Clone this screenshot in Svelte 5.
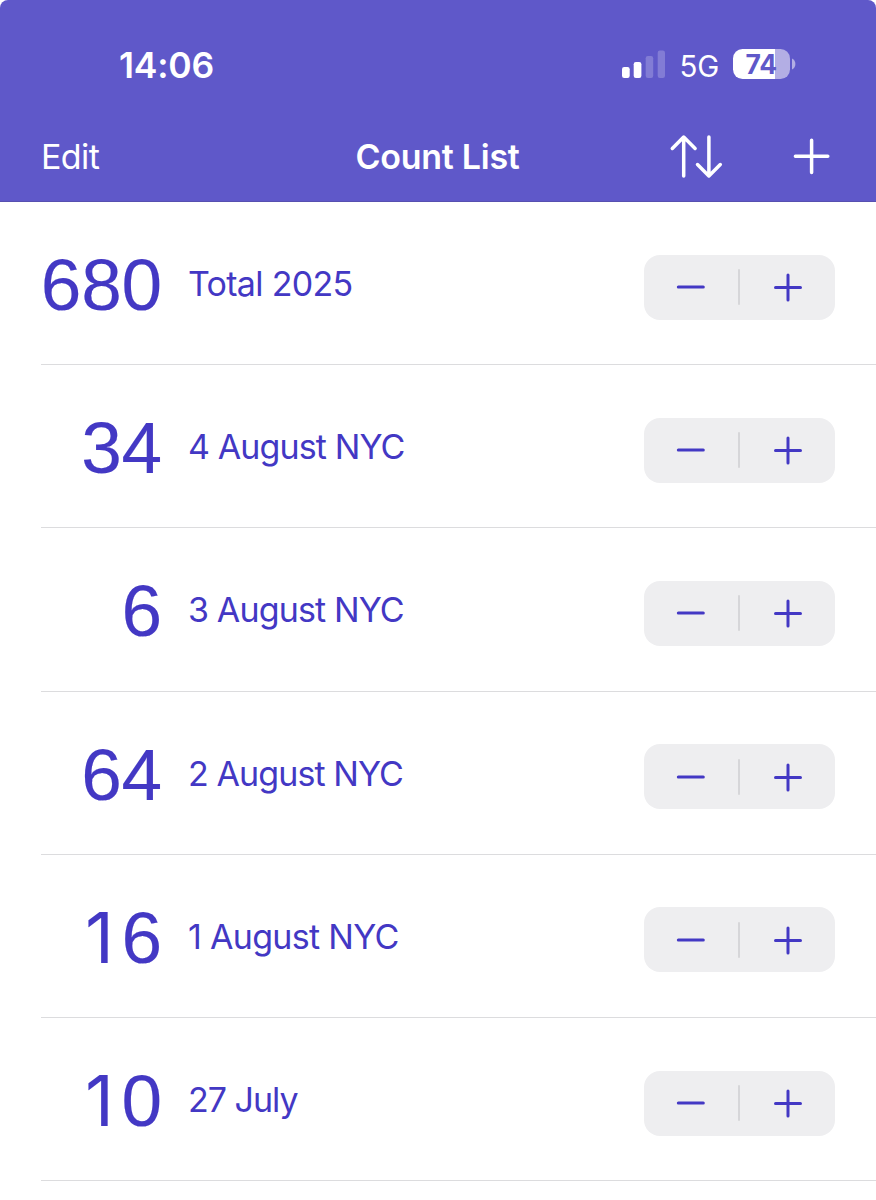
<script>
  let counters = $state([
    { count: 680, name: 'Total 2025', spacing: -0.7 },
    { count: 34, name: '4 August NYC', spacing: -0.88 },
    { count: 6, name: '3 August NYC', spacing: -0.86 },
    { count: 64, name: '2 August NYC', spacing: -0.9 },
    { count: 16, name: '1 August NYC', spacing: -0.7 },
    { count: 10, name: '27 July', spacing: -1 }
  ]);
</script>

<main class="screen">
  <header>
    <div class="status">
      <span class="clock">14:06</span>
      <div class="indicators">
        <svg class="signal" width="44" height="30" viewBox="0 0 44 30" fill="#fff">
          <rect x="0" y="18" width="7.7" height="11" rx="2.2" />
          <rect x="11.7" y="13" width="7.7" height="16" rx="2.2" />
          <rect x="23.7" y="7" width="7.5" height="22" rx="2.2" opacity=".22" />
          <rect x="35.7" y="1.5" width="7.3" height="27.5" rx="2.2" opacity=".22" />
        </svg>
        <span class="network">5G</span>
        <div class="battery"><span>74</span></div>
        <svg class="nub" width="4" height="12" viewBox="0 0 4 12"><path d="M0 0.5Q3.4 2.3 3.4 6T0 11.5Z" fill="#b3aee4" /></svg>
      </div>
    </div>
    <nav>
      <button class="edit">Edit</button>
      <h1>Count List</h1>
      <div class="actions">
        <button aria-label="Sort">
          <svg width="54" height="46" viewBox="0 0 54 46">
            <path d="M14.7 43V4.7M3.3 15.5L14.7 4L26.1 15.5M39.9 4V42.3M28.5 31.5L39.9 43L51.3 31.5" />
          </svg>
        </button>
        <button aria-label="Add">
          <svg width="40" height="40" viewBox="0 0 40 40">
            <path d="M19.6 4.2V36.4M3.4 20.3H35.8" />
          </svg>
        </button>
      </div>
    </nav>
  </header>

  <ul>
    {#each counters as counter}
      <li>
        <span class="count">{#each String(counter.count) as digit}<span class="digit" class:one={digit === '1'}>{digit}</span>{/each}</span>
        <span class="name" style:letter-spacing="{counter.spacing}px">{counter.name}</span>
        <div class="stepper">
          <button aria-label="Decrease" onclick={() => counter.count--}>
            <svg width="32" height="32" viewBox="0 0 32 32"><path d="M3.3 16H28.3" /></svg>
          </button>
          <i></i>
          <button aria-label="Increase" onclick={() => counter.count++}>
            <svg width="32" height="32" viewBox="0 0 32 32"><path d="M3.5 16.4H28.5M16 3.9V28.9" /></svg>
          </button>
        </div>
      </li>
    {/each}
  </ul>
</main>

<style>
  :global(body) { margin: 0; background: #fff; }
  .screen {
    width: 876px;
    height: 1200px;
    overflow: hidden;
    background: #fff;
    font-family: Inter, "Liberation Sans", sans-serif;
    color: #4338c4;
  }
  button {
    display: flex;
    align-items: center;
    justify-content: center;
    margin: 0;
    padding: 0;
    border: 0;
    background: none;
    color: inherit;
    font: inherit;
  }
  svg { display: block; flex: none; }
  path { stroke-linecap: round; stroke-linejoin: round; }
  header {
    box-sizing: border-box;
    height: 202px;
    background: #5f58c9;
    border-bottom: 1px solid #5750b0;
    border-radius: 8px 8px 0 0;
    color: #fff;
  }
  .status {
    display: flex;
    justify-content: space-between;
    box-sizing: border-box;
    height: 112px;
    padding: 49px 80px 0 119px;
  }
  .clock { font-size: 35.5px; line-height: 34px; font-weight: 600; letter-spacing: -0.2px; }
  .indicators { display: flex; height: 30px; }
  .signal { margin-right: 14px; }
  .network { width: 53.5px; font-size: 29.5px; line-height: 34px; letter-spacing: -0.3px; }
  .battery {
    box-sizing: border-box;
    width: 57px;
    height: 30px;
    padding-left: 12.5px;
    border-radius: 9.5px;
    background: linear-gradient(90deg, #fff 42px, #b3aee4 42px);
    color: #5f58c9;
    font-size: 26.5px;
    font-weight: 700;
    line-height: 31px;
  }
  .nub { margin: 9px 0 0 2px; }
  nav {
    display: grid;
    grid-template-columns: 1fr auto 1fr;
    align-items: center;
    height: 89px;
    padding: 0 44px 0 41px;
  }
  .edit { justify-self: start; font-size: 34px; font-weight: 400; letter-spacing: -0.6px; }
  h1 { margin: 0 -1px 0 1px; font-size: 34px; font-weight: 600; letter-spacing: -0.25px; }
  .actions { display: flex; align-items: center; justify-content: flex-end; gap: 69px; }
  .actions svg { margin-top: -1px; }
  .actions path { fill: none; stroke: #fff; stroke-width: 3.5; }
  ul { margin: 0; padding: 0 0 0 41px; list-style: none; }
  li {
    display: flex;
    align-items: center;
    box-sizing: border-box;
    height: 163.2px;
    padding: 8px 41px 0 0;
    border-bottom: 1.3px solid #dcdcde;
  }
  .count {
    display: flex;
    justify-content: flex-end;
    width: 121px;
    height: 84px;
    font-family: "Liberation Sans", sans-serif;
    font-size: 73px;
    line-height: 80px;
    -webkit-text-stroke: 0.15px #4338c4;
  }
  .digit { width: 40.4px; text-align: center; }
  .one {
    box-sizing: border-box;
    padding-right: 8px;
    font-family: Inter, sans-serif;
    font-size: 70px;
    text-align: right;
  }
  .name { flex: 1; height: 46px; padding-left: 26px; font-size: 34px; line-height: 40px; white-space: nowrap; }
  .stepper {
    display: flex;
    align-items: center;
    width: 191.5px;
    height: 65px;
    border-radius: 16px;
    background: #eeeef0;
  }
  .stepper button { flex: 1; height: 100%; }
  .stepper i { width: 2px; height: 36px; border-radius: 1px; background: #d6d6d9; }
  .stepper path { stroke: #4338c4; stroke-width: 3; fill: none; }
</style>
